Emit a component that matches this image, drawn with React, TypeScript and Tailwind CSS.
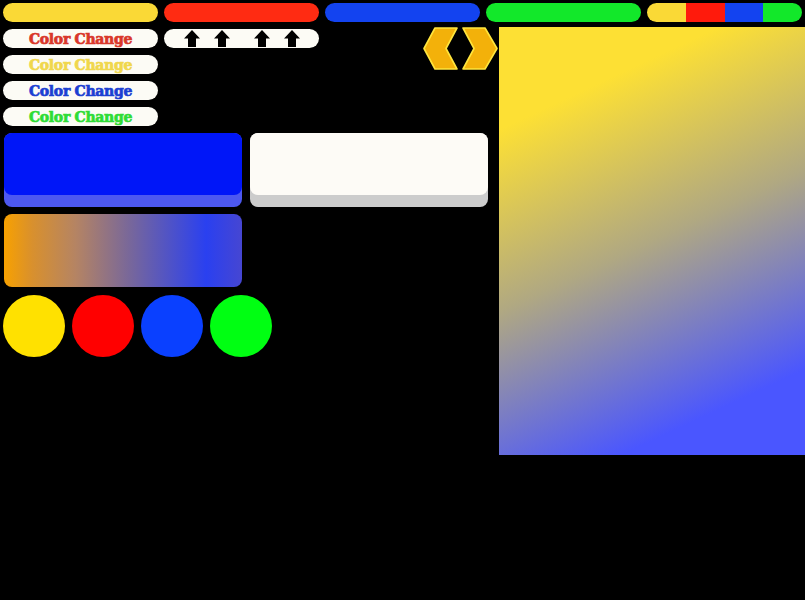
import React from 'react';

const LABELS = [
  { color: 'text-[#d9372a]' },
  { color: 'text-[#f0d74c]' },
  { color: 'text-[#1c3fd2]' },
  { color: 'text-[#2fdc35]' },
];

const UpArrow: React.FC<{ className?: string }> = ({ className }) => (
  <svg width="16" height="17" viewBox="0 0 16 17" className={className}>
    <path d="M8 0 L16 8.5 L12 8.5 L12 17 L4 17 L4 8.5 L0 8.5 Z" fill="#000" />
  </svg>
);

const Chevrons: React.FC = () => (
  <svg width="76" height="43" viewBox="0 0 76 43" className="ml-[104px]">
    <polygon points="1,21.5 12,1 34,1 23,21.5 34,42 12,42" fill="#f3b10a" stroke="#ffe53d" strokeWidth="1.6" strokeLinejoin="round" />
    <polygon points="40,1 62,1 74,21.5 62,42 40,42 51,21.5" fill="#f3b10a" stroke="#ffe53d" strokeWidth="1.6" strokeLinejoin="round" />
  </svg>
);

const PressButton: React.FC<{ face: string; lip: string }> = ({ face, lip }) => (
  <div className={`w-[238px] h-[74px] rounded-lg ${lip}`}>
    <div className={`h-[62px] rounded-lg ${face}`} />
  </div>
);

const App: React.FC = () => {
  return (
    <div className="w-[805px] h-[600px] bg-black overflow-hidden" style={{ fontFamily: '"DejaVu Serif", serif' }}>
      <div className="grid grid-cols-5 gap-[6px] px-[3px] pt-[3px]">
        <div className="h-[19px] rounded-full bg-[#fad936]" />
        <div className="h-[19px] rounded-full bg-[#ff2b12]" />
        <div className="h-[19px] rounded-full bg-[#1343f0]" />
        <div className="h-[19px] rounded-full bg-[#12e82a]" />
        <div className="h-[19px] rounded-full overflow-hidden flex">
          <div className="flex-1 bg-[#fad936]" />
          <div className="flex-1 bg-[#ff1a0c]" />
          <div className="flex-1 bg-[#1343f0]" />
          <div className="flex-1 bg-[#12e82a]" />
        </div>
      </div>

      <div className="flex mt-[5px]">
        <div className="w-[499px] flex flex-col">
          <div className="flex items-start">
            <div className="flex flex-col gap-[7px] ml-[3px] mt-[2px]">
              {LABELS.map((l, i) => (
                <div key={i} className="w-[155px] h-[19px] rounded-full bg-[#fcfbf5] flex items-center justify-center">
                  <span className={`text-[14px] font-bold leading-none tracking-[-0.3px] [-webkit-text-stroke:0.7px_currentColor] ${l.color}`}>Color Change</span>
                </div>
              ))}
            </div>
            <div className="w-[155px] h-[19px] ml-[6px] mt-[2px] rounded-full bg-[#fcfbf5] flex items-start gap-[14px] pl-[20px] pt-[1px]">
              <UpArrow />
              <UpArrow />
              <UpArrow className="ml-[10px]" />
              <UpArrow />
            </div>
            <Chevrons />
          </div>

          <div className="flex gap-[8px] ml-[4px] mt-[7px]">
            <PressButton face="bg-[#0016f8]" lip="bg-[#4d58f0]" />
            <PressButton face="bg-[#fdfbf6]" lip="bg-[#cccccc]" />
          </div>

          <div className="ml-[4px] mt-[7px] w-[238px] h-[73px] rounded-lg bg-[linear-gradient(90deg,#f8a100_0%,#d8902e_12%,#b58463_30%,#7a6898_52%,#2a40f0_85%,#4646d2_100%)]" />

          <div className="flex gap-[7px] ml-[3px] mt-[8px]">
            <div className="w-[62px] h-[62px] rounded-full bg-[#ffe100]" />
            <div className="w-[62px] h-[62px] rounded-full bg-[#ff0000]" />
            <div className="w-[62px] h-[62px] rounded-full bg-[#0a40ff]" />
            <div className="w-[62px] h-[62px] rounded-full bg-[#00ff12]" />
          </div>
        </div>

        <div className="flex-1 h-[428px] bg-[linear-gradient(155deg,#fde034_18%,#b0a882_50%,#4a56ff_85%)]" />
      </div>
    </div>
  );
};

export default App;
